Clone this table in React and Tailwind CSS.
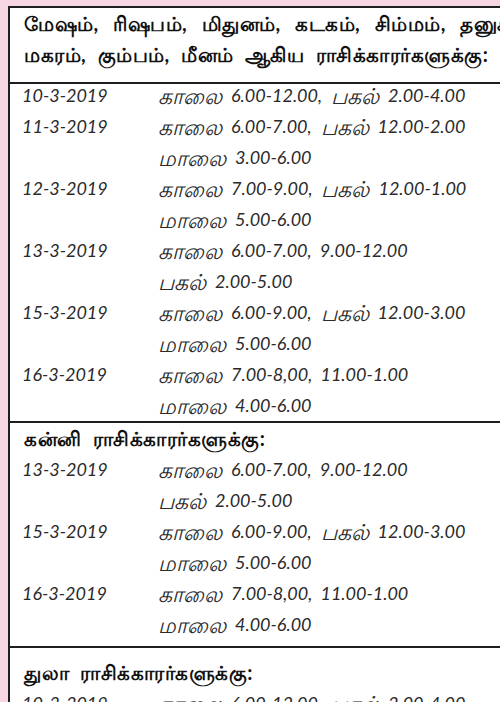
const MAIN_TITLE = [
  "மேஷம், ரிஷபம், மிதுனம், கடகம், சிம்மம், தனுசு,",
  "மகரம், கும்பம், மீனம் ஆகிய ராசிக்காரர்களுக்கு:",
];

const MAIN_ROWS = [
  ["10-3-2019", [["காலை", "6.00-12.00,"], ["பகல்", "2.00-4.00"]]],
  ["11-3-2019", [["காலை", "6.00-7.00,"], ["பகல்", "12.00-2.00"]]],
  ["", [["மாலை", "3.00-6.00"]]],
  ["12-3-2019", [["காலை", "7.00-9.00,"], ["பகல்", "12.00-1.00"]]],
  ["", [["மாலை", "5.00-6.00"]]],
  ["13-3-2019", [["காலை", "6.00-7.00, 9.00-12.00"]]],
  ["", [["பகல்", "2.00-5.00"]]],
  ["15-3-2019", [["காலை", "6.00-9.00,"], ["பகல்", "12.00-3.00"]]],
  ["", [["மாலை", "5.00-6.00"]]],
  ["16-3-2019", [["காலை", "7.00-8,00, 11.00-1.00"]]],
  ["", [["மாலை", "4.00-6.00"]]],
];

const KANNI_ROWS = [
  ["13-3-2019", [["காலை", "6.00-7.00, 9.00-12.00"]]],
  ["", [["பகல்", "2.00-5.00"]]],
  ["15-3-2019", [["காலை", "6.00-9.00,"], ["பகல்", "12.00-3.00"]]],
  ["", [["மாலை", "5.00-6.00"]]],
  ["16-3-2019", [["காலை", "7.00-8,00, 11.00-1.00"]]],
  ["", [["மாலை", "4.00-6.00"]]],
];

function Row({ date, parts }) {
  return (
    <div className="flex h-[31px] items-center whitespace-nowrap italic font-normal text-[#2a2a2a]">
      <div className="w-[136px] shrink-0 text-[18px]">{date}</div>
      <div className="flex items-center gap-[9px]">
        {parts.map(([word, time], i) => (
          <span key={i} className="flex items-center gap-[9px]">
            <span className="text-[22px] leading-[31px] font-light">{word}</span>
            <span className="text-[18px] leading-[31px] [word-spacing:4px]">{time}</span>
          </span>
        ))}
      </div>
    </div>
  );
}

function Title({ children, className = "" }) {
  return (
    <div
      className={
        "h-[31px] leading-[31px] whitespace-nowrap font-bold text-[20px] tracking-[0.5px] text-[#111] " +
        className
      }
    >
      {children}
    </div>
  );
}

export default function App() {
  return (
    <div
      className="w-[500px] h-[702px] overflow-hidden bg-[#f6d6e3] pl-[8px] pt-[6px]"
      style={{ fontFamily: '"Lato", "Noto Sans", sans-serif' }}
    >
      <div className="w-[540px] border-l-2 border-t-2 border-[#1e1e1e] bg-white">
        {/* header */}
        <div className="pl-[14px] pb-[12px] border-b-2 border-[#1e1e1e]">
          <Title className="[word-spacing:9px]">{MAIN_TITLE[0]}</Title>
          <Title className="[word-spacing:6px]">{MAIN_TITLE[1]}</Title>
        </div>
        <div className="pl-[12px] mt-[-4px]">
          {MAIN_ROWS.map(([d, p], i) => (
            <Row key={i} date={d} parts={p} />
          ))}
        </div>
        <div className="border-b-2 border-[#1e1e1e]" />

        {/* kanni */}
        <Title className="pl-[14px] [word-spacing:6px]">கன்னி ராசிக்காரர்களுக்கு:</Title>
        <div className="pl-[12px] pb-[6px]">
          {KANNI_ROWS.map(([d, p], i) => (
            <Row key={i} date={d} parts={p} />
          ))}
        </div>
        <div className="border-b-2 border-[#1e1e1e]" />

        {/* thula */}
        <div className="pt-[9px] pl-[14px]">
          <Title className="[word-spacing:6px]">துலா ராசிக்காரர்களுக்கு:</Title>
        </div>
        <div className="pl-[12px]">
          <Row date="10-3-2019" parts={[["காலை", "6.00-12.00,"], ["பகல்", "2.00-4.00"]]} />
        </div>
      </div>
    </div>
  );
}
